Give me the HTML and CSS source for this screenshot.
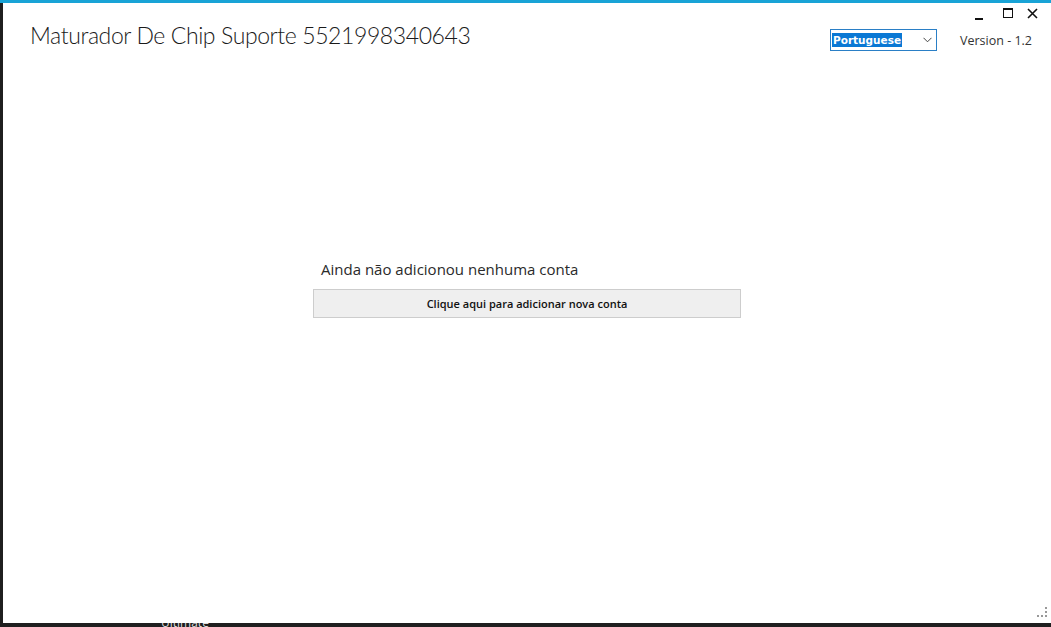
FILE: index.html
```html
<!DOCTYPE html>
<html>

<head>
    <meta charset="utf-8" />
    <title>Maturador De Chip</title>
    <link rel="stylesheet" href="styles.css">
</head>

<body>
    <div id="window">
        <div class="accent"></div>
        <div class="frame">
            <div class="edge"></div>
            <div class="main">
                <div class="header">
                    <h1 class="title">Maturador De Chip Suporte 5521998340643</h1>
                    <div class="side">
                        <div class="controls">
                            <span class="ctl ctl-min"></span>
                            <span class="ctl ctl-max"></span>
                            <span class="ctl ctl-close">
                                <svg width="11" height="11" viewBox="0 0 11 11">
                                    <path d="M1 1 L10 10 M10 1 L1 10" stroke="#111" stroke-width="1.6" />
                                </svg>
                            </span>
                        </div>
                        <div class="settings">
                            <div class="lang">
                                <span class="lang-value">Portuguese</span>
                                <svg class="chev" width="9" height="6" viewBox="0 0 9 6">
                                    <path d="M0.5 0.8 L4.5 4.8 L8.5 0.8" fill="none" stroke="#444" stroke-width="1" />
                                </svg>
                            </div>
                            <span class="version">Version - 1.2</span>
                        </div>
                    </div>
                </div>
                <div class="empty">
                    <div class="empty-box">
                        <p class="empty-text">Ainda não adicionou nenhuma conta</p>
                        <button class="add-btn">Clique aqui para adicionar nova conta</button>
                    </div>
                </div>
                <div class="grip">
                    <svg width="12" height="12" viewBox="0 0 12 12">
                        <g fill="#999">
                            <rect x="9" y="1" width="2" height="2" />
                            <rect x="9" y="5" width="2" height="2" />
                            <rect x="9" y="9" width="2" height="2" />
                            <rect x="5" y="9" width="2" height="2" />
                            <rect x="1" y="9" width="2" height="2" />
                        </g>
                    </svg>
                </div>
            </div>
        </div>
        <div class="taskbar"><span class="taskbar-label">Ultimate</span></div>
    </div>
</body>

</html>
```

FILE: styles.css
```css
html {
    margin: 0px;
    padding: 0px;
    width: 100%;
    height: 100%;
}

body {
    margin: 0px;
    padding: 0px;
    width: 100%;
    height: 100%;
    overflow: hidden;
    background-color: #fff;
    font-family: 'Open Sans', 'Noto Sans', sans-serif;
    color: #222;
}

#window {
    width: 100%;
    height: 100%;
    display: flex;
    flex-direction: column;
}

.accent {
    height: 3px;
    background-color: #18a3d6;
    flex: none;
}

.frame {
    flex: 1;
    display: flex;
    min-height: 0;
}

.edge {
    width: 3px;
    background-color: #1f1f1f;
    flex: none;
}

.main {
    flex: 1;
    display: flex;
    flex-direction: column;
    position: relative;
    background-color: #fff;
}

.header {
    display: flex;
    justify-content: space-between;
    height: 70px;
}

.title {
    margin: 0px;
    padding-left: 27px;
    padding-top: 18px;
    font-family: 'Lato', 'Open Sans', sans-serif;
    font-size: 23px;
    font-weight: 300;
    letter-spacing: -0.4px;
    color: #1a1a1a;
    white-space: nowrap;
}

.side {
    display: flex;
    flex-direction: column;
    align-items: flex-end;
}

.controls {
    display: flex;
    align-items: center;
    height: 20px;
    padding-right: 13px;
}

.ctl {
    display: block;
    width: 11px;
    height: 11px;
    position: relative;
}

.ctl svg {
    display: block;
}

.ctl-min {
    margin-right: 18px;
}

.ctl-min::after {
    content: '';
    position: absolute;
    left: 1px;
    bottom: -1px;
    width: 8px;
    height: 2px;
    background-color: #111;
}

.ctl-max {
    box-sizing: border-box;
    width: 10px;
    height: 10px;
    border: 1.5px solid #111;
    border-top-width: 2px;
    margin-right: 14px;
}

.settings {
    display: flex;
    align-items: center;
    margin-top: 6px;
    padding-right: 19px;
}

.lang {
    box-sizing: border-box;
    width: 107px;
    height: 22px;
    border: 1px solid #2a7fc6;
    display: flex;
    align-items: center;
    justify-content: space-between;
    padding-left: 1px;
    padding-right: 4px;
    margin-right: 23px;
}

.lang-value {
    background-color: #0a78d4;
    color: #fff;
    font-family: 'DejaVu Sans', sans-serif;
    font-weight: bold;
    font-size: 10.5px;
    line-height: 14px;
    padding: 0px 1px;
}

.chev {
    display: block;
}

.version {
    font-family: 'Open Sans', sans-serif;
    font-size: 12.5px;
    color: #333;
}

.empty {
    flex: 1;
    display: flex;
    justify-content: center;
    align-items: flex-start;
    padding-top: 186px;
}

.empty-box {
    width: 428px;
    display: flex;
    flex-direction: column;
}

.empty-text {
    margin: 0px 0px 10px 8px;
    font-size: 15px;
    color: #2a2a2a;
    line-height: 20px;
}

.add-btn {
    height: 29px;
    background-color: #efefef;
    border: 1px solid #cdcdcd;
    font-family: 'Open Sans', sans-serif;
    font-weight: 600;
    font-size: 11px;
    color: #111;
    padding: 0px;
}

.grip {
    position: absolute;
    right: 3px;
    bottom: 5px;
    line-height: 0;
}

.taskbar {
    height: 4px;
    flex: none;
    background-color: #1f1f1f;
    overflow: hidden;
    position: relative;
}

.taskbar-label {
    position: absolute;
    left: 161px;
    top: -9px;
    font-size: 12px;
    color: #ddd;
}
```
